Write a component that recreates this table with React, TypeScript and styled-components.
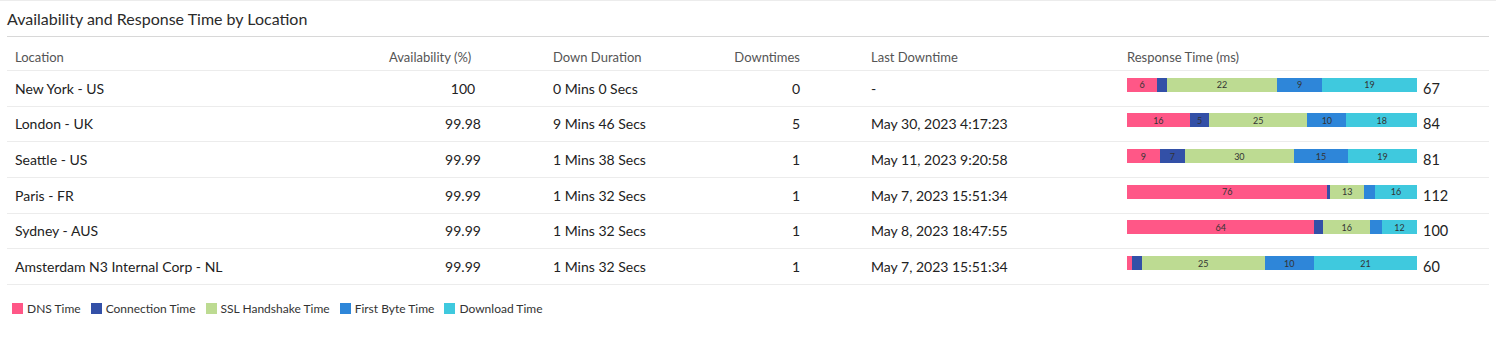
import React from "react";
import styled, { createGlobalStyle } from "styled-components";

const Global = createGlobalStyle`
  html, body { margin: 0; padding: 0; background: #fff; }
  body { font-family: Lato, "Open Sans", "Liberation Sans", sans-serif; color: #222; }
`;

const COLORS = ["#ff5787", "#3350a7", "#bddb92", "#2e86d9", "#3fc9de"];
const LEGEND = ["DNS Time", "Connection Time", "SSL Handshake Time", "First Byte Time", "Download Time"];
const COLS = "374px 164px 135px 128px 311px 370px";

type Row = {
  loc: string;
  avail: string;
  dur: string;
  downs: string;
  last: string;
  parts: number[];
  total: number;
};

const ROWS: Row[] = [
  { loc: "New York - US", avail: "100", dur: "0 Mins 0 Secs", downs: "0", last: "-", parts: [6, 2, 22, 9, 19], total: 67 },
  { loc: "London - UK", avail: "99.98", dur: "9 Mins 46 Secs", downs: "5", last: "May 30, 2023 4:17:23", parts: [16, 5, 25, 10, 18], total: 84 },
  { loc: "Seattle - US", avail: "99.99", dur: "1 Mins 38 Secs", downs: "1", last: "May 11, 2023 9:20:58", parts: [9, 7, 30, 15, 19], total: 81 },
  { loc: "Paris - FR", avail: "99.99", dur: "1 Mins 32 Secs", downs: "1", last: "May 7, 2023 15:51:34", parts: [76, 1, 13, 4, 16], total: 112 },
  { loc: "Sydney - AUS", avail: "99.99", dur: "1 Mins 32 Secs", downs: "1", last: "May 8, 2023 18:47:55", parts: [64, 3, 16, 4, 12], total: 100 },
  { loc: "Amsterdam N3 Internal Corp - NL", avail: "99.99", dur: "1 Mins 32 Secs", downs: "1", last: "May 7, 2023 15:51:34", parts: [1, 2, 25, 10, 21], total: 60 },
];

const Card = styled.section`
  border-top: 1px solid #ececec;
  padding: 0 7px;
  height: 336px;
`;

const Title = styled.h2`
  margin: 0;
  height: 35px;
  display: flex;
  align-items: center;
  font-size: 16px;
  font-weight: 400;
  color: #2b2b2b;
  border-bottom: 1px solid #d8d8d8;
`;

const Table = styled.div`
  margin-top: 7px;
  display: flex;
  flex-direction: column;
`;

const RowGrid = styled.div<{ $head?: boolean }>`
  display: grid;
  grid-template-columns: ${COLS};
  align-items: center;
  height: ${(p) => (p.$head ? "27px" : "35.67px")};
  box-sizing: border-box;
  border-bottom: 1px solid #ececec;
  font-size: ${(p) => (p.$head ? "13px" : "14px")};
  color: ${(p) => (p.$head ? "#555" : "#222")};
`;

const Cell = styled.div<{ $align?: "left" | "right" | "center"; $pl?: number; $pr?: number }>`
  text-align: ${(p) => p.$align || "left"};
  padding-left: ${(p) => p.$pl ?? 8}px;
  padding-right: ${(p) => p.$pr ?? 8}px;
  white-space: nowrap;
`;

const BarCell = styled.div`
  display: flex;
  align-items: center;
  padding-left: 8px;
`;

const Bar = styled.div`
  display: flex;
  width: 290px;
  height: 14px;
  margin-bottom: 7px;
`;

const Seg = styled.div<{ $color: string; $v: number }>`
  flex: ${(p) => p.$v} 1 0;
  min-width: 0;
  background: ${(p) => p.$color};
  font-size: 9px;
  color: #333;
  display: flex;
  align-items: center;
  justify-content: center;
  overflow: hidden;
`;

const Total = styled.span`
  margin-left: 6px;
  font-size: 14.5px;
  color: #222;
`;

const Legend = styled.div`
  display: flex;
  align-items: center;
  gap: 10px;
  margin: 16px 0 0 5px;
  font-size: 12px;
  color: #333;
`;

const LegendItem = styled.div`
  display: flex;
  align-items: center;
  gap: 4px;
`;

const Swatch = styled.span<{ $color: string }>`
  width: 11px;
  height: 11px;
  background: ${(p) => p.$color};
`;

export default function App() {
  return (
    <>
      <Global />
      <Card>
        <Title>Availability and Response Time by Location</Title>
        <Table>
          <RowGrid $head>
            <Cell>Location</Cell>
            <Cell $align="right" $pr={74}>Availability (%)</Cell>
            <Cell>Down Duration</Cell>
            <Cell $align="right">Downtimes</Cell>
            <Cell $pl={63}>Last Downtime</Cell>
            <Cell>Response Time (ms)</Cell>
          </RowGrid>
          {ROWS.map((r) => (
            <RowGrid key={r.loc}>
              <Cell>{r.loc}</Cell>
              <Cell $align="center" $pl={0} $pr={0}>{r.avail}</Cell>
              <Cell>{r.dur}</Cell>
              <Cell $align="right">{r.downs}</Cell>
              <Cell $pl={63}>{r.last}</Cell>
              <BarCell>
                <Bar>
                  {r.parts.map((v, i) => (
                    <Seg key={i} $color={COLORS[i]} $v={v}>
                      {v >= 5 ? v : ""}
                    </Seg>
                  ))}
                </Bar>
                <Total>{r.total}</Total>
              </BarCell>
            </RowGrid>
          ))}
        </Table>
        <Legend>
          {LEGEND.map((l, i) => (
            <LegendItem key={l}>
              <Swatch $color={COLORS[i]} />
              {l}
            </LegendItem>
          ))}
        </Legend>
      </Card>
    </>
  );
}
